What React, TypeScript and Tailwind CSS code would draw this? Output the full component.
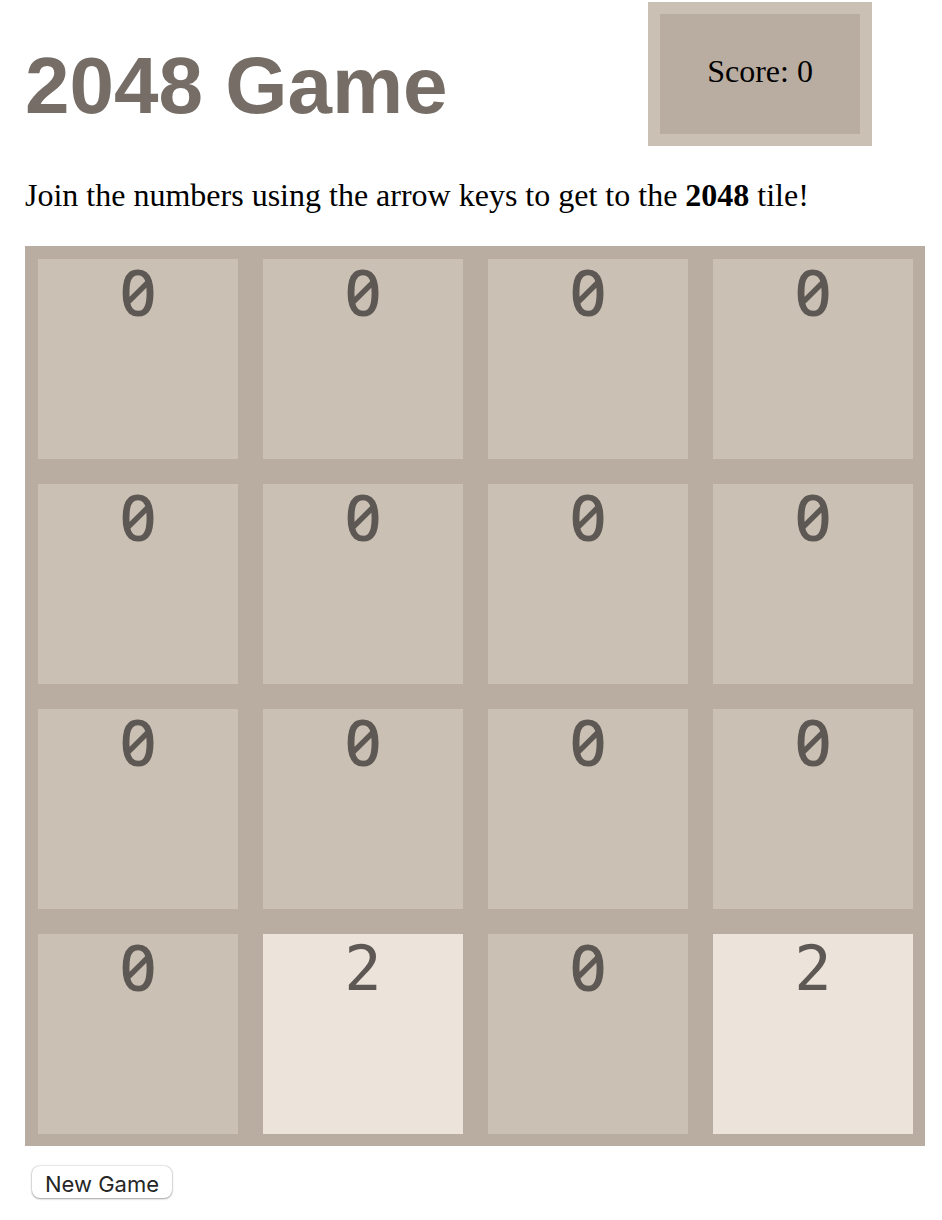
import { useState } from "react";

const START = [
  [0, 0, 0, 0],
  [0, 0, 0, 0],
  [0, 0, 0, 0],
  [0, 2, 0, 2],
];

export default function App() {
  const [board, setBoard] = useState(START);
  const [score, setScore] = useState(0);

  const newGame = () => {
    setBoard(START);
    setScore(0);
  };

  return (
    <main className="pt-0.5 pr-[17px] pb-4 pl-[25px] text-black font-['Liberation_Serif',serif]">
      <div className="mx-auto max-w-[900px]">
        <header className="flex items-start justify-between pr-[53px]">
          <h1 className="pt-9 text-[80px] leading-[96px] font-bold text-[#766e66] font-['Liberation_Sans',sans-serif]">
            2048 Game
          </h1>
          <div className="flex h-36 w-56 justify-center border-12 border-[#cac0b4] bg-[#b9ada1] pt-[39px] text-[32px] leading-9">
            <p>Score: {score}</p>
          </div>
        </header>
        <p className="pt-[31px] text-[32px] leading-9">
          Join the numbers using the arrow keys to get to the <strong>2048</strong> tile!
        </p>
        <div className="mt-[33px] grid grid-cols-4 gap-[25px] bg-[#b9ada1] p-[13px] pr-3 pb-3">
          {board.flat().map((value, i) => (
            <div
              key={i}
              className={
                "aspect-square text-center text-[#5e5854] " +
                (value === 0
                  ? "bg-[#cac0b4] text-[64px] leading-[66px] font-medium slashed-zero font-['Noto_Sans',sans-serif]"
                  : "bg-[#ece4db] text-[62px] leading-[70px] font-['DejaVu_Sans_Mono',monospace]")
              }
            >
              {value}
            </div>
          ))}
        </div>
        <button
          type="button"
          onClick={newGame}
          className="mt-5 ml-[7px] h-8 rounded-lg bg-white px-[13px] pt-1 text-[22px] leading-7 text-[#262626] shadow-[0_0_2px_rgba(0,0,0,0.3),0_1px_2px_rgba(0,0,0,0.3)] font-['Inter',sans-serif]"
        >
          New Game
        </button>
      </div>
    </main>
  );
}
